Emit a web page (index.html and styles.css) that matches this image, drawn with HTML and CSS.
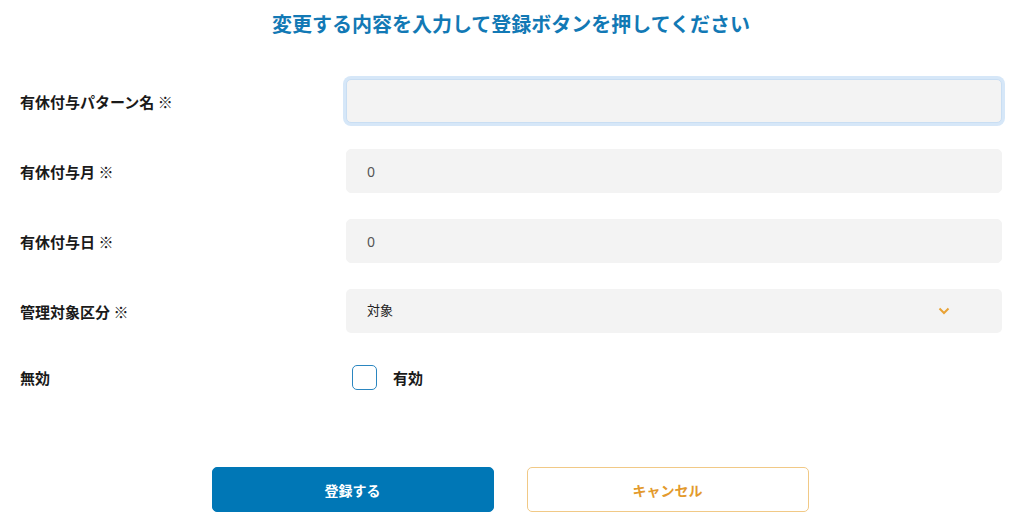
FILE: index.html
```html
<!DOCTYPE html>
<html lang="ja">
<head>
<meta charset="utf-8">
<title>有休付与パターン編集</title>
<link rel="stylesheet" href="styles.css">
</head>
<body>
<main class="page">
  <h1 class="title">変更する内容を入力して登録ボタンを押してください</h1>
  <form class="form">
    <div class="row">
      <label class="label">有休付与パターン名 ※</label>
      <div class="field"><input class="input focused" type="text" value=""></div>
    </div>
    <div class="row">
      <label class="label">有休付与月 ※</label>
      <div class="field"><input class="input" type="text" value="0"></div>
    </div>
    <div class="row">
      <label class="label">有休付与日 ※</label>
      <div class="field"><input class="input" type="text" value="0"></div>
    </div>
    <div class="row">
      <label class="label">管理対象区分 ※</label>
      <div class="field">
        <div class="select">
          <span class="select-text">対象</span>
          <svg class="chevron" width="12" height="8" viewBox="0 0 12 8"><polyline points="1.5,1.5 6,6 10.5,1.5" fill="none" stroke="#e8a235" stroke-width="2"/></svg>
        </div>
      </div>
    </div>
    <div class="row row-check">
      <label class="label">無効</label>
      <div class="field check-field">
        <span class="checkbox"></span>
        <span class="check-text">有効</span>
      </div>
    </div>
    <div class="actions">
      <button type="button" class="btn btn-primary">登録する</button>
      <button type="button" class="btn btn-cancel">キャンセル</button>
    </div>
  </form>
</main>
</body>
</html>
```

FILE: styles.css
```css
* { box-sizing: border-box; }
html, body {
  margin: 0;
  padding: 0;
  background: #fff;
}
body {
  font-family: "Noto Sans CJK JP", "Noto Sans", sans-serif;
  color: #222;
}
.page {
  padding: 10px 22px 0 20px;
}
.title {
  margin: 0;
  text-align: center;
  font-size: 20px;
  line-height: 28px;
  font-weight: 700;
  color: #1279b5;
}
.form {
  margin-top: 41px;
  display: flex;
  flex-direction: column;
  gap: 26px;
}
.row {
  display: grid;
  grid-template-columns: 326px 1fr;
  align-items: center;
  height: 44px;
}
.row-check {
  height: 36px;
}
.label {
  font-size: 15px;
  font-weight: 700;
  color: #1a1a1a;
}
.field {
  display: flex;
  align-items: center;
}
.input {
  width: 100%;
  height: 44px;
  border: 1px solid #f3f3f3;
  border-radius: 5px;
  background: #f3f3f3;
  padding: 0 20px;
  font-family: "Noto Sans", "Noto Sans CJK JP", sans-serif;
  font-size: 14px;
  color: #555;
  outline: none;
}
.input.focused {
  border-color: #c9def3;
  box-shadow: 0 0 0 3px #d6e7f8;
}
.select {
  width: 100%;
  height: 44px;
  border-radius: 5px;
  background: #f3f3f3;
  padding: 0 52px 3px 21px;
  display: flex;
  align-items: center;
  justify-content: space-between;
}
.select-text {
  font-size: 13px;
  color: #222;
}
.chevron {
  margin-top: 2px;
}
.check-field {
  padding-left: 6px;
  gap: 16px;
}
.checkbox {
  width: 25px;
  height: 25px;
  border: 1.5px solid #2b86c0;
  border-radius: 5px;
  background: #fff;
}
.check-text {
  font-size: 15px;
  font-weight: 700;
  color: #1a1a1a;
}
.actions {
  margin-top: 46px;
  display: flex;
  justify-content: center;
  gap: 33px;
  padding-right: 2px;
}
.btn {
  width: 282px;
  height: 45px;
  border-radius: 5px;
  font-family: "Noto Sans CJK JP", sans-serif;
  font-size: 14px;
  font-weight: 700;
  cursor: pointer;
}
.btn-primary {
  background: #0077b6;
  border: 1px solid #0077b6;
  color: #fff;
}
.btn-cancel {
  background: #fff;
  border: 1.5px solid #f1c986;
  color: #e39a2d;
}
```
